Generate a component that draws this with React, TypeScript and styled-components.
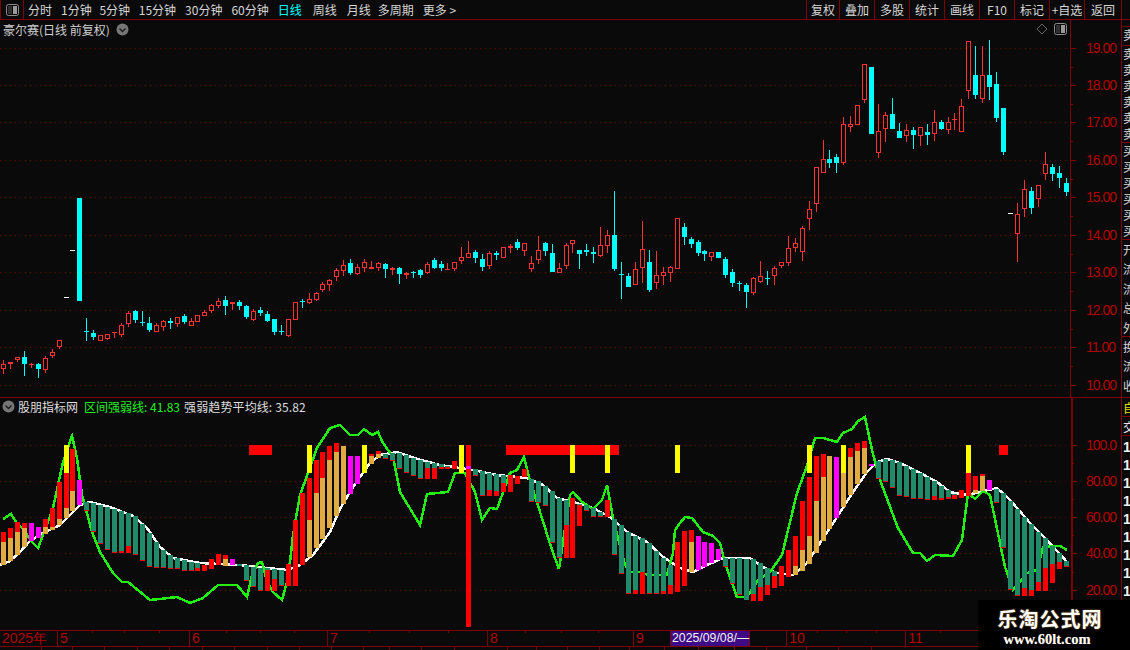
import React from "react";
import styled, { createGlobalStyle } from "styled-components";

const BG = "#0a0a0a";
const LINE = "#7f0000";
const AXIS_TEXT = "#b40000";
const CJK = `"Noto Sans CJK SC", "Liberation Sans", sans-serif`;

type Kind = "r" | "c" | "w";
type Candle = [number, number, number, number, Kind];

const CANDLES: Candle[] = [
  [360, 364, 369, 374, "r"], [362, 362, 364, 369, "r"], [357, 357, 360, 362, "r"], [351, 357, 364, 376, "c"],
  [363, 364, 365, 368, "r"], [363, 364, 369, 378, "c"], [356, 358, 370, 373, "r"], [349, 352, 356, 358, "r"],
  [340, 340, 347, 349, "r"], [297, 297, 298, 298, "w"], [250, 250, 251, 251, "w"], [198, 198, 301, 301, "c"],
  [318, 331, 332, 341, "c"], [330, 333, 337, 340, "c"], [335, 335, 341, 341, "r"], [334, 334, 339, 340, "r"],
  [332, 332, 333, 338, "r"], [323, 325, 335, 337, "r"], [311, 313, 324, 327, "r"], [310, 311, 320, 323, "c"],
  [311, 322, 323, 326, "c"], [317, 323, 330, 332, "c"], [323, 325, 332, 332, "r"], [320, 321, 327, 331, "r"],
  [318, 321, 323, 329, "c"], [317, 317, 324, 327, "r"], [314, 316, 322, 324, "c"], [318, 321, 326, 326, "r"],
  [315, 315, 322, 322, "r"], [310, 312, 316, 316, "r"], [304, 305, 311, 313, "r"], [298, 301, 306, 308, "r"],
  [296, 300, 306, 315, "c"], [302, 302, 304, 310, "r"], [300, 302, 306, 310, "c"], [305, 306, 317, 319, "c"],
  [309, 311, 320, 321, "r"], [307, 310, 313, 316, "c"], [311, 314, 321, 322, "c"], [319, 319, 332, 335, "c"],
  [325, 331, 332, 335, "c"], [319, 319, 336, 337, "r"], [302, 302, 320, 320, "r"], [299, 301, 302, 308, "c"],
  [293, 299, 303, 304, "r"], [292, 293, 300, 301, "r"], [282, 284, 290, 292, "r"], [279, 280, 285, 291, "r"],
  [268, 270, 277, 281, "r"], [260, 265, 271, 276, "r"], [259, 263, 273, 275, "c"], [264, 267, 274, 275, "r"],
  [259, 262, 268, 272, "r"], [261, 267, 269, 269, "r"], [262, 263, 268, 271, "r"], [263, 264, 269, 278, "c"],
  [267, 268, 270, 275, "r"], [267, 268, 274, 284, "c"], [272, 273, 275, 279, "r"], [271, 272, 273, 278, "c"],
  [269, 270, 275, 278, "c"], [262, 264, 273, 274, "r"], [258, 260, 268, 269, "c"], [261, 264, 268, 271, "c"],
  [263, 269, 270, 270, "r"], [262, 262, 269, 271, "r"], [247, 257, 261, 264, "r"], [241, 253, 258, 258, "r"],
  [250, 252, 258, 263, "c"], [254, 259, 267, 271, "c"], [251, 253, 266, 269, "r"], [251, 253, 255, 260, "c"],
  [247, 247, 258, 258, "r"], [244, 246, 248, 253, "r"], [239, 242, 248, 250, "c"], [243, 243, 251, 256, "r"],
  [256, 263, 269, 272, "r"], [236, 250, 260, 264, "r"], [242, 243, 251, 256, "c"], [244, 253, 272, 272, "c"],
  [263, 268, 273, 273, "r"], [243, 245, 266, 269, "r"], [240, 240, 244, 253, "r"], [250, 250, 254, 269, "c"],
  [244, 250, 252, 256, "c"], [247, 252, 254, 263, "c"], [227, 245, 256, 257, "r"], [230, 235, 246, 253, "r"],
  [191, 235, 269, 271, "c"], [262, 274, 275, 299, "c"], [273, 276, 287, 287, "c"], [262, 269, 285, 285, "r"],
  [221, 249, 268, 283, "r"], [250, 262, 290, 292, "c"], [251, 275, 283, 289, "r"], [267, 272, 276, 285, "r"],
  [266, 267, 273, 282, "r"], [218, 218, 269, 269, "r"], [223, 227, 237, 245, "c"], [237, 239, 244, 248, "c"],
  [240, 242, 253, 256, "c"], [250, 251, 254, 261, "c"], [252, 252, 257, 261, "r"], [252, 252, 258, 258, "c"],
  [257, 259, 275, 278, "c"], [269, 272, 283, 287, "c"], [281, 283, 284, 291, "c"], [283, 285, 292, 308, "c"],
  [277, 278, 293, 295, "r"], [261, 276, 282, 283, "r"], [271, 278, 279, 285, "c"], [266, 268, 276, 285, "r"],
  [262, 262, 266, 268, "r"], [236, 248, 263, 266, "r"], [238, 243, 248, 252, "r"], [226, 228, 252, 261, "r"],
  [201, 209, 219, 230, "r"], [167, 167, 204, 212, "r"], [140, 159, 173, 173, "r"], [150, 159, 163, 168, "c"],
  [154, 157, 163, 173, "c"], [117, 124, 163, 165, "r"], [116, 124, 127, 132, "r"], [105, 105, 125, 125, "r"],
  [64, 64, 100, 103, "r"], [67, 67, 134, 134, "c"], [104, 131, 153, 158, "r"], [112, 115, 129, 142, "r"],
  [98, 114, 129, 129, "c"], [123, 131, 138, 138, "c"], [124, 130, 136, 142, "r"], [127, 130, 135, 149, "c"],
  [127, 127, 136, 146, "r"], [124, 132, 135, 145, "c"], [110, 122, 134, 141, "r"], [120, 122, 129, 130, "c"],
  [117, 122, 130, 134, "r"], [113, 119, 120, 130, "r"], [99, 106, 132, 132, "r"], [41, 41, 91, 99, "r"],
  [46, 75, 95, 99, "c"], [46, 75, 99, 103, "r"], [40, 75, 87, 100, "c"], [72, 84, 118, 122, "c"],
  [108, 108, 152, 155, "c"], [213, 213, 214, 214, "w"], [203, 214, 234, 262, "r"], [180, 189, 209, 217, "r"],
  [187, 191, 208, 214, "c"], [185, 185, 199, 207, "r"], [152, 164, 174, 180, "r"], [164, 167, 174, 181, "c"],
  [166, 173, 178, 188, "c"], [178, 183, 192, 196, "c"],
];

const BARS: string[] = [
  "r532-542 g542-565", "r528-538 g538-561", "r522-532 g532-555", "r523-528 g528-547", "m523-541", "m527-538",
  "r519-527 g527-534", "r508-527 g527-530", "r482-519 g519-525", "y445-473 r473-508 g508-518", "r449-491 g491-511", "m480-505",
  "t502-510 r510-511", "t503-531 r531-532", "t505-543 r543-544", "t507-549 r549-550", "t509-552 r552-553", "t511-551 r551-553",
  "t513-546 r546-553", "t516-554 r554-555", "t524-560 r560-561", "t533-566 r566-567", "t542-567 r567-568", "t550-567 r567-568",
  "t555-568 r568-569", "t558-568 r568-569", "t560-570 r570-571", "t562-570 r570-571", "t563-568 r568-571", "r565-571",
  "r559-569", "r554-565", "r555-559 g559-566", "m559-565", "t564-566", "t565-580 r580-581",
  "t567-586 r586-587", "t568-590 r590-591", "t568-570 r570-591", "t569-579 r579-591", "t570-585 r585-586", "r564-586",
  "r520-586", "r493-565", "y445-473 r478-520 g520-557", "r460-493 g493-548", "r452-478 g478-539", "r446-460 g460-528",
  "r443-452 g452-516", "g446-504", "m456-494", "m456-484", "y445-473", "r454-456 g456-464",
  "r451-454 g454-458", "t454-458 r458-459", "t453-460 r460-461", "t453-468 r468-469", "t455-472 r472-473", "t458-475 r475-476",
  "t460-478 r478-479", "t462-468 r468-479", "t463-468 r468-479", "t464-467 r467-469", "t466-467 r467-469", "r461-469",
  "y445-473", "r445-466 m466-469 r469-627", "t469-475 r475-476", "t471-495 r495-496", "t473-490 r490-496", "t474-491 r491-496",
  "t475-483 r483-492", "r475-492", "r476-484", "r469-477", "t479-501 r501-502", "t481-502 r502-503",
  "t486-505 r505-506", "t491-542 r542-543", "t498-557 r557-558", "t500-525 r525-558", "y445-473 r498-558", "t504-505 r505-526",
  "t505-510 r510-511", "t508-516 r516-517", "t512-516 r516-517", "y445-473 r500-517", "t519-554 r554-555", "t525-573 r573-574",
  "t532-593 r593-594", "t536-590 r590-594", "t538-572 r572-594", "t543-593 r593-594", "t551-593 r593-594", "t558-591 r591-594",
  "t565-585 r585-594", "y445-473 r542-592", "r531-586", "r530-542 g542-572", "m536-570", "m542-567",
  "m543-563", "m549-560", "t558-566 r566-567", "t558-583 r583-584", "t558-594 r594-595", "t559-600",
  "t559-594 r594-601", "t563-587 r587-601", "t568-585 r585-595", "t571-576 r576-588", "r566-586", "r550-577",
  "r536-566 g566-575", "r501-550 g550-571", "y445-473 r477-536 g536-564", "r456-501 g501-553", "r454-477 g477-541", "g456-529",
  "m457-518", "y445-473 g473-507", "r448-457 g457-495", "r443-451 g451-484", "r441-448 g448-474", "m464-466",
  "t461-478 r478-479", "t459-481 r481-482", "t460-487 r487-488", "t462-495 r495-496", "t466-496 r496-497", "t469-498 r498-499",
  "t473-498 r498-499", "t477-499 r499-500", "t481-496 r496-500", "t486-498 r498-500", "t490-497 r497-499", "t494-495 r495-499",
  "r490-498", "y445-473 r473-496", "r476-490 g490-493", "r474-476 g476-491", "m480-490", "t489-502 r502-503",
  "t493-547 r547-548", "t501-589 r589-590", "t509-595 r595-596", "t517-588 r588-596", "t524-590 r590-596", "t532-582 r582-591",
  "t538-568 r568-591", "t546-564 r564-583", "t553-562 r562-569", "t561-566 r566-567",
];

const BAR_COLOURS: Record<string, string> = {
  r: "#ff0000",
  g: "#e0ab42",
  m: "#ff00ff",
  t: "#218a68",
  y: "#ffff00",
};

const WHITE_LINE = [
  [0, 565], [10, 561], [20, 552], [30, 541], [43, 533], [60, 525], [70, 515], [80, 505], [90, 502], [110, 507],
  [133, 516], [147, 528], [160, 547], [173, 558], [200, 563], [240, 565], [267, 568], [287, 570], [300, 565], [313, 555],
  [330, 532], [340, 509], [350, 492], [360, 477], [370, 463], [380, 455], [397, 452], [417, 459], [440, 465], [453, 467],
  [473, 470], [497, 475], [527, 478], [543, 485], [557, 498], [573, 502], [593, 508], [610, 517], [627, 532], [647, 542],
  [663, 557], [680, 568], [693, 572], [707, 565], [723, 558], [750, 558], [763, 567], [777, 573], [793, 575], [807, 563],
  [820, 543], [837, 517], [853, 492], [867, 472], [877, 462], [887, 459], [900, 463], [920, 473], [937, 482], [950, 492],
  [967, 495], [997, 488], [1010, 500], [1030, 523], [1047, 540], [1068, 563],
];

const GREEN_LINE = [
  [3, 519], [11, 514], [17, 523], [23, 529], [32, 542], [38, 548], [43, 535], [53, 508], [63, 462], [72, 436],
  [77, 458], [82, 495], [88, 517], [92, 532], [100, 552], [113, 573], [122, 582], [128, 582], [150, 600], [160, 599],
  [177, 597], [190, 603], [203, 598], [218, 585], [237, 585], [247, 597], [252, 575], [258, 563], [262, 562], [267, 582],
  [273, 592], [282, 600], [287, 582], [290, 562], [293, 535], [300, 495], [308, 473], [317, 448], [330, 428], [340, 425],
  [350, 435], [358, 435], [364, 429], [372, 435], [378, 432], [383, 443], [393, 457], [400, 492], [420, 525], [427, 494],
  [448, 492], [455, 473], [465, 473], [475, 492], [482, 520], [490, 508], [497, 509], [510, 473], [517, 470], [524, 457],
  [529, 477], [552, 550], [559, 569], [570, 495], [573, 492], [582, 502], [593, 509], [602, 500], [607, 485], [613, 518],
  [625, 565], [630, 572], [640, 572], [648, 575], [667, 575], [673, 553], [675, 530], [680, 523], [685, 517], [692, 518],
  [703, 532], [713, 536], [720, 543], [725, 563], [737, 597], [747, 597], [758, 580], [770, 572], [782, 555], [797, 493],
  [808, 463], [815, 438], [823, 438], [837, 442], [843, 433], [852, 429], [858, 421], [865, 417], [872, 450], [880, 480],
  [898, 528], [913, 553], [920, 553], [927, 561], [935, 555], [953, 556], [962, 540], [968, 493], [975, 499], [983, 491],
  [990, 495], [1005, 567], [1013, 590], [1027, 573], [1037, 570], [1043, 547], [1060, 546], [1067, 550],
];

const BANDS = [
  [249, 23],
  [506, 113],
  [999, 9],
];

const PRICES = [
  ["19.00", 48], ["18.00", 85], ["17.00", 122], ["16.00", 160], ["15.00", 197],
  ["14.00", 235], ["13.00", 272], ["12.00", 310], ["11.00", 347], ["10.00", 385],
] as const;

const LEVELS = [
  ["100.0", 445], ["80.00", 481], ["60.00", 517], ["40.00", 553], ["20.00", 590],
] as const;

const PERIODS = [
  { label: "分时", gap: 4 }, { label: "1分钟", gap: 9 }, { label: "5分钟", gap: 7.7 }, { label: "15分钟", gap: 8.7 },
  { label: "30分钟", gap: 9 }, { label: "60分钟", gap: 9 }, { label: "日线", gap: 9, active: true }, { label: "周线", gap: 11 },
  { label: "月线", gap: 10 }, { label: "多周期", gap: 7 }, { label: "更多 >", gap: 9 },
];

const TOOLS = [
  { label: "复权", w: 33 }, { label: "叠加", w: 35 }, { label: "多股", w: 35 }, { label: "统计", w: 35 }, { label: "画线", w: 35 },
  { label: "F10", w: 35 }, { label: "标记", w: 35 }, { label: "+自选", w: 35 }, { label: "返回", w: 37 },
];

const MONTHS = [
  { label: "2025年", w: 58 }, { label: "5", w: 132 }, { label: "6", w: 138 }, { label: "7", w: 160 },
  { label: "8", w: 146 }, { label: "9", w: 37 }, { label: "2025/09/08/—", w: 79, date: true }, { label: "", w: 37 },
  { label: "10", w: 119 }, { label: "11", w: 215 },
];

const TIME_TICKS = [92, 124, 159, 226, 260, 294, 369, 409, 448, 525, 561, 598, 817, 846, 876, 940];

const TAB_EDGES = [0, 42, 73, 105, 138, 170, 203, 235, 268, 300, 332, 364, 390, 422, 455, 508, 537, 568, 600, 630, 665, 699, 735, 767, 807, 839, 872];

const SIDE_UPPER = [
  { h: 19, line: 16, chars: "卖" },
  { h: 97, line: 16, chars: "卖卖卖卖卖卖" },
  { h: 97, line: 16, chars: "买买买买买买" },
  { h: 97, line: 19.4, chars: "开流流总外" },
  { h: 61, line: 19.4, chars: "换流收" },
];

const columnX = (i: number) => Math.round(3 + 6.945 * i);

const GlobalStyle = createGlobalStyle`
  html, body {
    margin: 0;
    padding: 0;
    background: ${BG};
  }
  * {
    box-sizing: border-box;
  }
`;

const Page = styled.div`
  position: relative;
  width: 1130px;
  height: 650px;
  overflow: hidden;
  background: ${BG};
  color: #d6d6d6;
  font-family: ${CJK};
  font-size: 12px;
`;

const Toolbar = styled.div`
  display: flex;
  align-items: stretch;
  height: 20px;
  padding-right: 8px;
  border-bottom: 1px solid ${LINE};
`;

const LayoutButton = styled.div`
  display: flex;
  align-items: center;
  justify-content: center;
  width: 24px;
  border-left: 1px solid ${LINE};
  border-right: 1px solid ${LINE};
`;

const Periods = styled.div`
  display: flex;
  align-items: center;
`;

const Period = styled.span<{ $gap: number; $active?: boolean }>`
  margin-left: ${(p) => p.$gap}px;
  color: ${(p) => (p.$active ? "#00ffff" : "#d6d6d6")};
  white-space: nowrap;
  line-height: 19px;
`;

const Tools = styled.div`
  display: flex;
  margin-left: auto;
  border-right: 1px solid ${LINE};
`;

const Tool = styled.span<{ $w: number }>`
  flex: 0 0 ${(p) => p.$w}px;
  border-left: 1px solid ${LINE};
  text-align: center;
  line-height: 19px;
  white-space: nowrap;
`;

const Body = styled.div`
  display: flex;
  height: 630px;
`;

const Charts = styled.div`
  display: flex;
  flex-direction: column;
  width: 1121px;
`;

const PricePane = styled.div`
  position: relative;
  height: 378px;
  border-bottom: 1px solid ${LINE};
`;

const IndicatorPane = styled.div`
  position: relative;
  height: 232px;
`;

const ChartSvg = styled.svg`
  display: block;
  shape-rendering: crispEdges;
`;

const AxisLabel = styled.text`
  fill: ${AXIS_TEXT};
  font-family: "Liberation Sans", sans-serif;
  font-size: 14px;
  letter-spacing: -1px;
`;

const TitleRow = styled.div`
  position: absolute;
  top: 1px;
  left: 3px;
  display: flex;
  align-items: center;
  gap: 6px;
  height: 16px;
  color: #cfcfcf;
  white-space: nowrap;
`;

const PaneControls = styled.div`
  position: absolute;
  top: 3px;
  left: 1036px;
  display: flex;
  align-items: center;
  gap: 6px;
`;

const LegendRow = styled.div`
  position: absolute;
  top: 0;
  left: 2px;
  display: flex;
  align-items: center;
  height: 16px;
  white-space: nowrap;
  color: #dedede;
`;

const LegendName = styled.span`
  margin-left: 3px;
`;

const LegendValue = styled.span<{ $green?: boolean }>`
  margin-left: ${(p) => (p.$green ? "6px" : "4px")};
  color: ${(p) => (p.$green ? "#22ee22" : "#dedede")};
  letter-spacing: ${(p) => (p.$green ? "0" : "0.12px")};
`;

const SideStrip = styled.div`
  flex: 1;
  min-width: 0;
  overflow: hidden;
  padding-top: 6px;
  border-left: 1px solid ${LINE};
`;

const SideSection = styled.div<{ $h: number; $line: number }>`
  height: ${(p) => p.$h}px;
  overflow: hidden;
  padding-left: 1px;
  border-top: 1px solid ${LINE};
  line-height: ${(p) => p.$line}px;
  font-size: 12px;
  color: #d6d6d6;
  white-space: nowrap;
`;

const SideTag = styled.div<{ $yellow?: boolean }>`
  height: 19px;
  overflow: hidden;
  padding-left: 1px;
  border-top: 1px solid ${LINE};
  line-height: 19px;
  color: ${(p) => (p.$yellow ? "#e0e000" : "#e6e6e6")};
`;

const SideDigits = styled.div`
  padding: 2px 0 0 1px;
  border-top: 1px solid ${LINE};
  color: #f0f0f0;
  font-family: "Liberation Sans", sans-serif;
  font-size: 14px;
  font-weight: 700;
  line-height: 18px;
`;

const TimeAxis = styled.div`
  position: absolute;
  top: 630px;
  left: 0;
  display: flex;
  width: 1130px;
  height: 17px;
  border-top: 1px solid ${LINE};
  border-bottom: 1px solid ${LINE};
`;

const MonthCell = styled.div<{ $w: number; $date?: boolean }>`
  flex: 0 0 ${(p) => p.$w}px;
  padding-left: ${(p) => (p.$date ? "1px" : "2px")};
  border-right: 1px solid ${LINE};
  background: ${(p) => (p.$date ? "#3e0a86" : "transparent")};
  color: ${(p) => (p.$date ? "#f0f0f0" : AXIS_TEXT)};
  font-family: "Liberation Sans", sans-serif;
  font-size: ${(p) => (p.$date ? "12.3px" : "14px")};
  line-height: 15px;
  white-space: nowrap;
`;

const TimeTicks = styled.svg`
  position: absolute;
  top: 0;
  left: 0;
  pointer-events: none;
`;

const TabRow = styled.div`
  position: absolute;
  top: 647px;
  left: 0;
  display: flex;
  height: 3px;
`;

const TabCell = styled.div<{ $w: number }>`
  flex: 0 0 ${(p) => p.$w}px;
  border-right: 1px solid ${LINE};
`;

const Watermark = styled.div`
  position: absolute;
  top: 600px;
  left: 978px;
  display: flex;
  flex-direction: column;
  align-items: center;
  width: 152px;
  height: 50px;
  padding: 7px 8px 0 0;
  background: #000;
  color: #fff;
  font-weight: 700;
`;

const WatermarkName = styled.div`
  font-size: 20px;
  letter-spacing: 1px;
  line-height: 24px;
  text-shadow: 0 0 2px #b08040;
`;

const WatermarkUrl = styled.div`
  margin: 0 6px 0 0;
  font-family: "Liberation Serif", serif;
  font-size: 14.5px;
  line-height: 16px;
  text-shadow: 0 0 1px #705030;
`;

const PaneIcon = () => (
  <svg width="13" height="12" viewBox="0 0 13 12">
    <rect x="0.5" y="0.5" width="12" height="11" rx="2" fill="none" stroke="#8c8c8c" />
    <rect x="2" y="2" width="4" height="8" fill="#303030" />
    <rect x="7" y="2" width="4" height="8" fill="#9a9a9a" />
  </svg>
);

const RoundChevron = () => (
  <svg width="13" height="13" viewBox="0 0 13 13">
    <circle cx="6.5" cy="6.5" r="6" fill="#767676" />
    <path d="M3.5 5.5 L6.5 8.5 L9.5 5.5" fill="none" stroke="#1c1c1c" strokeWidth="1.4" />
  </svg>
);

const Diamond = () => (
  <svg width="12" height="12" viewBox="0 0 12 12">
    <path d="M6 1 L11 6 L6 11 L1 6 Z" fill="none" stroke="#666" />
  </svg>
);

const Axis = ({ levels, top, bottom, x }: { levels: readonly (readonly [string, number])[]; top: number; bottom: number; x: number }) => {
  const minor = levels.slice(1).map(([, y], i) => Math.round((y + levels[i][1]) / 2));
  return (
    <>
      {levels.map(([, y]) => (
        <line key={y} x1={0} x2={1068} y1={y + 0.5} y2={y + 0.5} stroke="#660000" strokeDasharray="1 4" />
      ))}
      <rect x={x} y={top} width={x === 1071 ? 2 : 1} height={bottom - top} fill={LINE} />
      {levels.map(([label, y]) => (
        <g key={label}>
          <rect x={x} y={y} width={6} height={1} fill={LINE} />
          <AxisLabel x={1086} y={y + 5}>
            {label}
          </AxisLabel>
        </g>
      ))}
      {minor.map((y) => (
        <rect key={y} x={x} y={y} width={3} height={1} fill={LINE} />
      ))}
    </>
  );
};

const CandleMark = ({ candle, i }: { candle: Candle; i: number }) => {
  const [wickTop, bodyTop, bodyBottom, wickBottom, kind] = candle;
  const x = columnX(i);
  if (kind === "w") {
    return <rect x={x - 2} y={wickTop} width={5} height={1} fill="#ffffff" />;
  }
  const colour = kind === "r" ? "#ff3232" : "#00ffff";
  const flat = kind === "c" || bodyBottom - bodyTop <= 2;
  return (
    <g fill={colour}>
      <rect x={x} y={wickTop} width={1} height={Math.max(bodyTop - wickTop, 0)} />
      <rect x={x} y={bodyBottom} width={1} height={Math.max(wickBottom - bodyBottom, 0)} />
      {flat ? (
        <rect x={x - 2} y={bodyTop} width={5} height={Math.max(bodyBottom - bodyTop, 1)} />
      ) : (
        <rect x={x - 1.5} y={bodyTop + 0.5} width={4} height={bodyBottom - bodyTop - 1} fill="none" stroke={colour} />
      )}
    </g>
  );
};

const StackedBar = ({ spec, i }: { spec: string; i: number }) => (
  <>
    {spec.split(" ").map((part) => {
      const [from, to] = part.slice(1).split("-").map(Number);
      return <rect key={part} x={columnX(i) - 2} y={from} width={5} height={to - from} fill={BAR_COLOURS[part[0]]} />;
    })}
  </>
);

const toPoints = (pts: number[][]) => pts.map((p) => p.join(",")).join(" ");

export default function App() {
  return (
    <Page>
      <GlobalStyle />
      <Toolbar>
        <LayoutButton>
          <PaneIcon />
        </LayoutButton>
        <Periods>
          {PERIODS.map((p) => (
            <Period key={p.label} $gap={p.gap} $active={p.active}>
              {p.label}
            </Period>
          ))}
        </Periods>
        <Tools>
          {TOOLS.map((t) => (
            <Tool key={t.label} $w={t.w}>
              {t.label}
            </Tool>
          ))}
        </Tools>
      </Toolbar>
      <Body>
        <Charts>
          <PricePane>
            <ChartSvg width={1121} height={377} viewBox="0 20 1121 377">
              <Axis levels={PRICES} top={20} bottom={397} x={1070} />
              {CANDLES.map((c, i) => (
                <CandleMark key={i} candle={c} i={i} />
              ))}
            </ChartSvg>
            <TitleRow>
              <span>豪尔赛(日线 前复权)</span>
              <RoundChevron />
            </TitleRow>
            <PaneControls>
              <Diamond />
              <PaneIcon />
            </PaneControls>
          </PricePane>
          <IndicatorPane>
            <ChartSvg width={1121} height={232} viewBox="0 398 1121 232">
              <Axis levels={LEVELS} top={398} bottom={630} x={1071} />
              <polyline points={toPoints(WHITE_LINE)} fill="none" stroke="#ffffff" strokeWidth={2.5} />
              <polyline points={toPoints(GREEN_LINE)} fill="none" stroke="#22ee11" strokeWidth={2.5} />
              {BANDS.map(([x, w]) => (
                <rect key={x} x={x} y={445} width={w} height={10} fill="#ff0000" />
              ))}
              {BARS.map((b, i) => (
                <StackedBar key={i} spec={b} i={i} />
              ))}
            </ChartSvg>
            <LegendRow>
              <RoundChevron />
              <LegendName>股朋指标网</LegendName>
              <LegendValue $green>区间强弱线: 41.83</LegendValue>
              <LegendValue>强弱趋势平均线: 35.82</LegendValue>
            </LegendRow>
          </IndicatorPane>
        </Charts>
        <SideStrip>
          {SIDE_UPPER.map((s, n) => (
            <SideSection key={n} $h={s.h} $line={s.line}>
              {s.chars.split("").map((c, k) => (
                <div key={k}>{c}</div>
              ))}
            </SideSection>
          ))}
          <SideTag $yellow>自</SideTag>
          <SideTag>交</SideTag>
          <SideDigits>
            {Array.from({ length: 10 }).map((_, k) => (
              <div key={k}>1</div>
            ))}
          </SideDigits>
        </SideStrip>
      </Body>
      <TimeAxis>
        {MONTHS.map((m, k) => (
          <MonthCell key={k} $w={m.w} $date={m.date}>
            {m.label}
          </MonthCell>
        ))}
        <TimeTicks width={1130} height={3}>
          {TIME_TICKS.map((x) => (
            <rect key={x} x={x} y={0} width={1} height={2} fill={LINE} />
          ))}
        </TimeTicks>
      </TimeAxis>
      <TabRow>
        {TAB_EDGES.slice(1).map((edge, k) => (
          <TabCell key={edge} $w={edge - TAB_EDGES[k]} />
        ))}
      </TabRow>
      <Watermark>
        <WatermarkName>乐淘公式网</WatermarkName>
        <WatermarkUrl>www.60lt.com</WatermarkUrl>
      </Watermark>
    </Page>
  );
}
